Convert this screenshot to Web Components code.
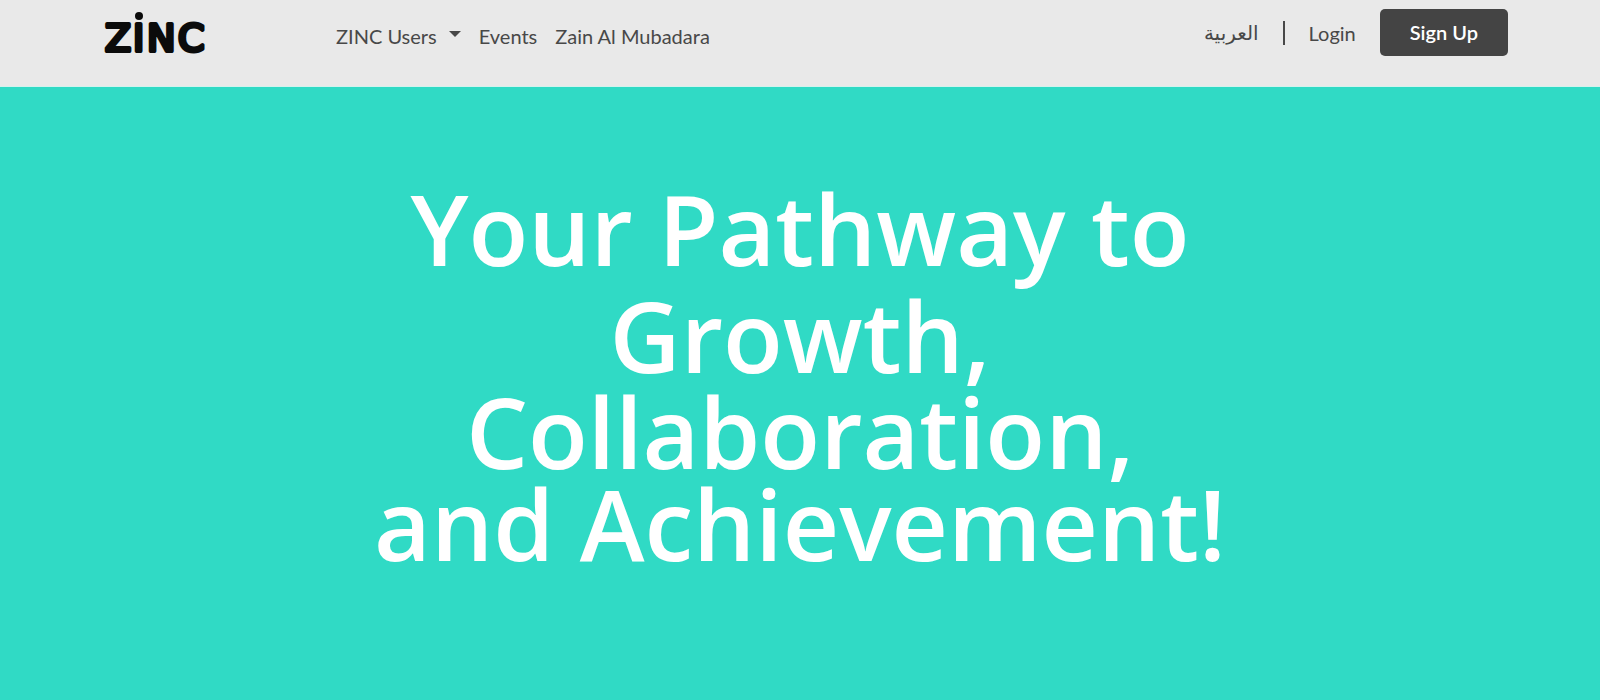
<!DOCTYPE html>
<html lang="en">
<head>
<meta charset="utf-8">
<meta name="viewport" content="width=device-width, initial-scale=1">
<title>ZINC</title>
<style>
    body{
        margin: 0;
        min-height: 100vh;
        display: flex;
        flex-direction: column;
        background: #30dac5;
        font-family: Lato, "DejaVu Sans", sans-serif;
    }
    zinc-hero{
        flex: 1;
    }
</style>
</head>
<body>
<zinc-header>
    <zinc-logo slot="logo"></zinc-logo>
    <zinc-menu slot="nav">ZINC Users</zinc-menu>
    <zinc-link slot="nav" href="#events">Events</zinc-link>
    <zinc-link slot="nav" href="#mubadara">Zain Al Mubadara</zinc-link>
    <zinc-link slot="account" href="#ar" lang="ar">العربية</zinc-link>
    <zinc-link slot="account" href="#login" divided>Login</zinc-link>
    <zinc-button slot="account">Sign Up</zinc-button>
</zinc-header>
<zinc-hero>
    <span slot="lead">Your Pathway to Growth,</span>
    <span slot="rest">Collaboration,<br>and Achievement!</span>
</zinc-hero>

<script>
class ZincHeader extends HTMLElement {
    constructor() {
        super();
        this.attachShadow({mode:'open'})

        this.shadowRoot.innerHTML = `
        <style>
            :host{
                display: block;
                background: #e9e9e9;
                border-bottom: 1px solid #d5f1ed;
                color: #484848;
                font-size: 20px;
                line-height: 24px;
            }
            header{
                display: flex;
                align-items: flex-start;
                min-height: 77px;
                padding: 9px 92px 0 104px;
            }
            nav{
                display: flex;
                gap: 18px;
                padding: 15px 0 0 128px;
            }
            #account{
                display: flex;
                align-items: center;
                gap: 24px;
                margin-left: auto;
            }
        </style>
        <header>
            <slot name="logo"></slot>
            <nav><slot name="nav"></slot></nav>
            <div id="account"><slot name="account"></slot></div>
        </header>
        `
    }
}

class ZincLogo extends HTMLElement {
    constructor() {
        super();
        this.attachShadow({mode:'open'})

        this.shadowRoot.innerHTML = `
        <style>
            :host{
                display: block;
            }
            a{
                display: block;
                color: #0b0b0b;
            }
            svg{
                display: block;
            }
            text{
                font: 38px "DejaVu Sans", sans-serif;
                stroke: currentColor;
                stroke-width: 4;
                stroke-linejoin: round;
            }
        </style>
        <a href="#home" aria-label="ZINC home">
            <svg width="104" height="56" fill="currentColor">
                <text y="42" x="1 29 43 74">ZINC</text>
                <circle cx="35" cy="7" r="4"/>
            </svg>
        </a>
        `
    }
}

class ZincLink extends HTMLElement {
    constructor() {
        super();
        this.attachShadow({mode:'open'})

        this.shadowRoot.innerHTML = `
        <style>
            :host{
                display: block;
            }
            :host([divided]){
                border-left: 2px solid #484848;
                padding-left: 24px;
            }
            :host([lang=ar]){
                font-family: "DejaVu Sans", sans-serif;
            }
            a{
                color: inherit;
                text-decoration: none;
            }
        </style>
        <a><slot></slot></a>
        `
    }

    connectedCallback(){
        this.shadowRoot.querySelector('a').href = this.getAttribute('href')
    }
}

class ZincMenu extends HTMLElement {
    constructor() {
        super();
        this.attachShadow({mode:'open'})

        this.shadowRoot.innerHTML = `
        <style>
            :host{
                display: block;
            }
            button{
                display: flex;
                gap: 12px;
                padding: 0;
                border: 0;
                background: none;
                color: inherit;
                font: inherit;
            }
            svg{
                margin-top: 7px;
            }
        </style>
        <button type="button" aria-haspopup="true">
            <slot></slot>
            <svg width="12" height="6" fill="currentColor" aria-hidden="true"><path d="M0 0h12L6 6z"/></svg>
        </button>
        `
    }
}

class ZincButton extends HTMLElement {
    constructor() {
        super();
        this.attachShadow({mode:'open'})

        this.shadowRoot.innerHTML = `
        <style>
            :host{
                display: block;
            }
            button{
                display: block;
                padding: 12px 30px;
                border: 0;
                border-radius: 5px;
                background: #444;
                color: white;
                font: inherit;
                font-weight: 600;
                line-height: 23px;
            }
        </style>
        <button type="button"><slot></slot></button>
        `
    }
}

class ZincHero extends HTMLElement {
    constructor() {
        super();
        this.attachShadow({mode:'open'})

        this.shadowRoot.innerHTML = `
        <style>
            :host{
                display: block;
                background: #30dac5;
                color: white;
                text-align: center;
            }
            h1{
                max-width: 900px;
                margin: 0 auto;
                padding: 88px 24px;
                font-family: "Open Sans", "Noto Sans", sans-serif;
                font-size: 98px;
                font-weight: 600;
            }
            #lead{
                display: block;
                line-height: 107px;
            }
            #rest{
                display: block;
                margin-top: -4px;
                line-height: 92px;
            }
        </style>
        <h1>
            <span id="lead"><slot name="lead"></slot></span>
            <span id="rest"><slot name="rest"></slot></span>
        </h1>
        `
    }
}

customElements.define('zinc-header',ZincHeader)
customElements.define('zinc-logo',ZincLogo)
customElements.define('zinc-link',ZincLink)
customElements.define('zinc-menu',ZincMenu)
customElements.define('zinc-button',ZincButton)
customElements.define('zinc-hero',ZincHero)
</script>
</body>
</html>
